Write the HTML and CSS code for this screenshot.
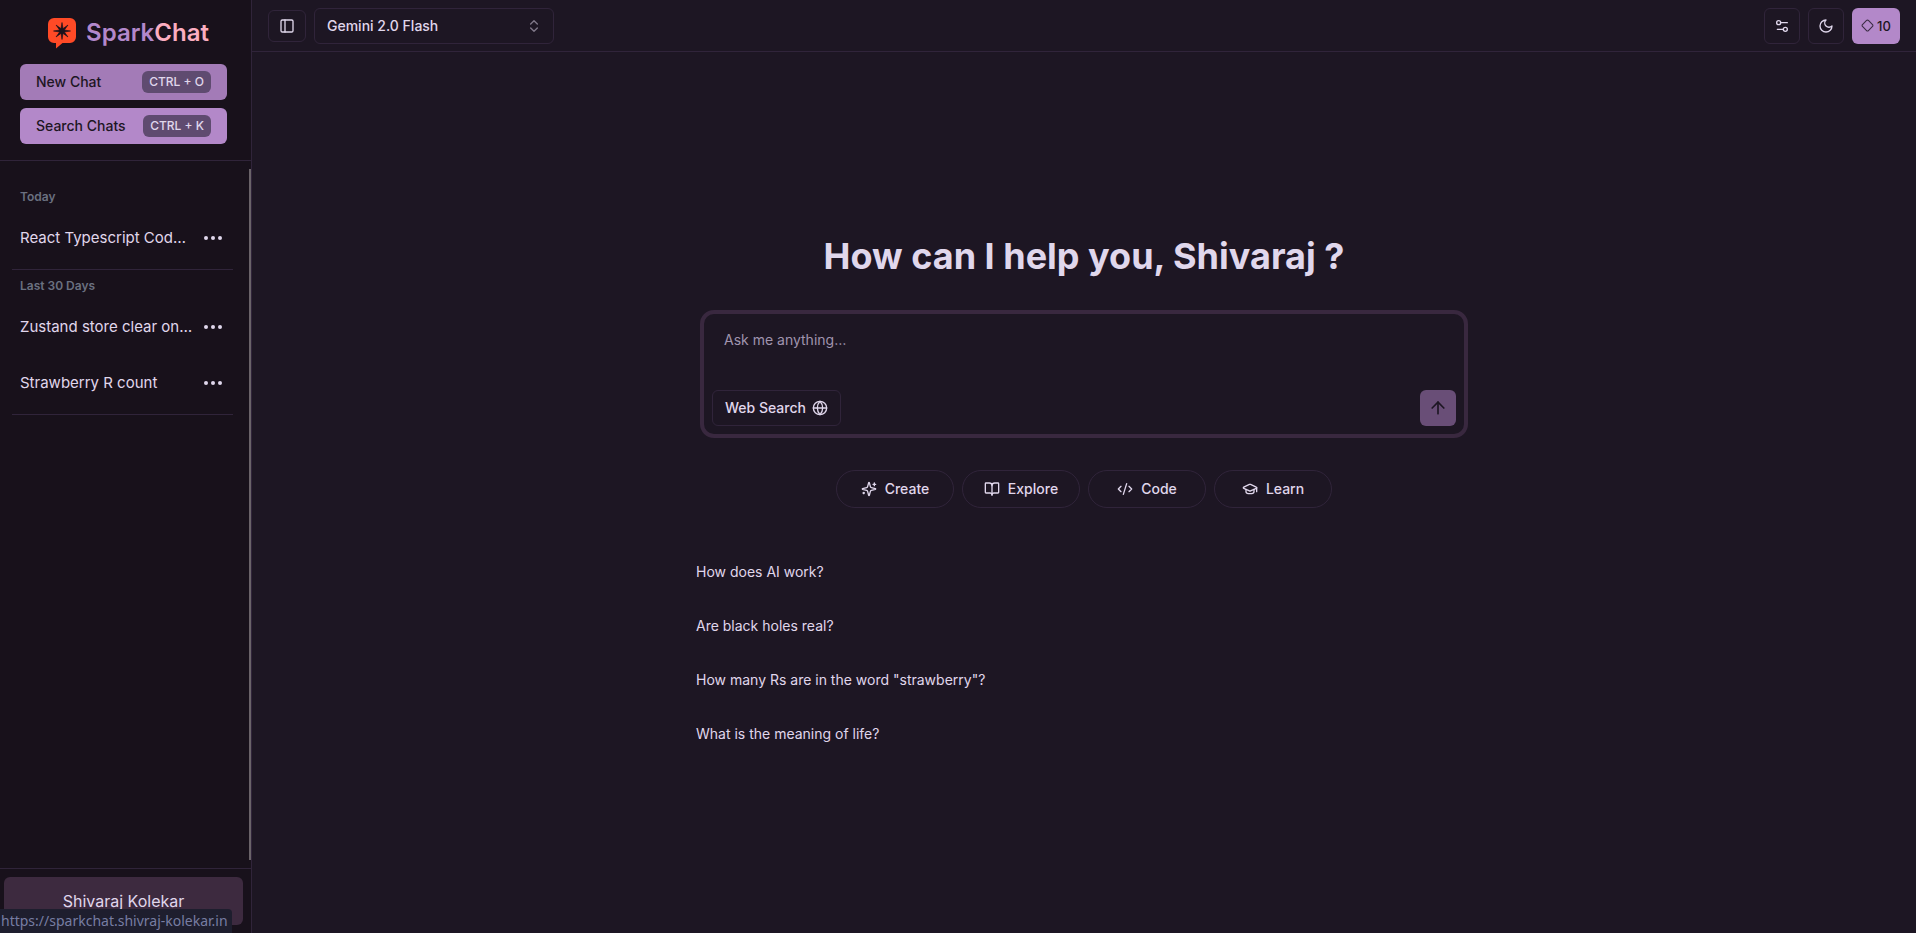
FILE: index.html
```html
<!DOCTYPE html>
<html lang="en">
<head>
<meta charset="utf-8">
<title>SparkChat</title>
<link rel="stylesheet" href="styles.css">
</head>
<body>
<div class="app">
  <aside class="sidebar">
    <div class="sidebar-top">
      <a class="brand" href="#">
        <svg class="brand-mark" viewBox="0 0 28 31" aria-hidden="true">
          <path fill="#ff4a26" d="M6 0h16a6 6 0 0 1 6 6v13a6 6 0 0 1-6 6h-7.500L8 30.500V25H6a6 6 0 0 1-6-6V6a6 6 0 0 1 6-6z"/>
          <path fill="#18111b" stroke="#18111b" stroke-width=".6" stroke-linejoin="round" d="M14 4.500l1 6.100L20 7l-3.600 5 6.100 1-6.100 1 3.600 5-5-3.600-1 6.100-1-6.100L8 19l3.600-5-6.100-1 6.100-1L8 7l5 3.600z"/>
        </svg>
        <span class="brand-name"><span class="brand-first">Spark</span><span class="brand-second">Chat</span></span>
      </a>
      <button class="action action-new" type="button">New Chat <kbd>CTRL + O</kbd></button>
      <button class="action" type="button">Search Chats <kbd>CTRL + K</kbd></button>
    </div>
    <nav class="history" aria-label="Chats">
      <section class="group">
        <h2>Today</h2>
        <div class="chat"><a href="#">React Typescript Cod…</a><button type="button" aria-label="More"><svg viewBox="0 0 20 6"><circle cx="3" cy="3" r="2"/><circle cx="10" cy="3" r="2"/><circle cx="17" cy="3" r="2"/></svg></button></div>
      </section>
      <section class="group">
        <h2>Last 30 Days</h2>
        <div class="chat"><a href="#">Zustand store clear on…</a><button type="button" aria-label="More"><svg viewBox="0 0 20 6"><circle cx="3" cy="3" r="2"/><circle cx="10" cy="3" r="2"/><circle cx="17" cy="3" r="2"/></svg></button></div>
        <div class="chat"><a href="#">Strawberry R count</a><button type="button" aria-label="More"><svg viewBox="0 0 20 6"><circle cx="3" cy="3" r="2"/><circle cx="10" cy="3" r="2"/><circle cx="17" cy="3" r="2"/></svg></button></div>
      </section>
    </nav>
    <div class="sidebar-foot"><button class="profile" type="button">Shivaraj Kolekar</button></div>
  </aside>
  <main class="main">
    <header class="topbar">
      <button class="icon-btn toggle" type="button" aria-label="Toggle sidebar"><svg class="icon" viewBox="0 0 24 24"><rect width="18" height="18" x="3" y="3" rx="2"/><path d="M9 3v18"/></svg></button>
      <div class="model">
        <select aria-label="Model"><option>Gemini 2.0 Flash</option></select>
        <svg class="icon model-arrows" viewBox="0 0 24 24"><path d="m7 15 5 5 5-5"/><path d="m7 9 5-5 5 5"/></svg>
      </div>
      <div class="tools">
        <button class="icon-btn" type="button" aria-label="Settings"><svg class="icon" viewBox="0 0 24 24"><path d="M20 7h-9"/><path d="M14 17H5"/><circle cx="17" cy="17" r="3"/><circle cx="7" cy="7" r="3"/></svg></button>
        <button class="icon-btn" type="button" aria-label="Theme"><svg class="icon" viewBox="0 0 24 24"><path d="M12 3a6 6 0 0 0 9 9 9 9 0 1 1-9-9Z"/></svg></button>
        <button class="credits" type="button"><svg class="icon credit-mark" viewBox="0 0 24 24"><path d="M2.700 10.300a2.410 2.410 0 0 0 0 3.410l7.590 7.590a2.410 2.410 0 0 0 3.410 0l7.590-7.590a2.410 2.410 0 0 0 0-3.410L13.700 2.710a2.410 2.410 0 0 0-3.410 0Z"/></svg>10</button>
      </div>
    </header>
    <div class="stage">
      <div class="welcome">
        <h1>How can I help you, Shivaraj ?</h1>
        <form class="composer">
          <textarea aria-label="Message" placeholder="Ask me anything…"></textarea>
          <div class="composer-row">
            <button class="web" type="button">Web Search <svg class="icon" viewBox="0 0 24 24"><circle cx="12" cy="12" r="10"/><path d="M12 2a14.500 14.500 0 0 0 0 20 14.500 14.500 0 0 0 0-20"/><path d="M2 12h20"/></svg></button>
            <button class="send" type="button" aria-label="Send"><svg class="icon" viewBox="0 0 24 24"><path d="m5 12 7-7 7 7"/><path d="M12 19V5"/></svg></button>
          </div>
        </form>
        <div class="topics">
          <button type="button"><svg class="icon" viewBox="0 0 24 24"><path d="M9.937 15.500A2 2 0 0 0 8.500 14.063l-6.135-1.582a.5.5 0 0 1 0-.962L8.500 9.936A2 2 0 0 0 9.937 8.500l1.582-6.135a.5.5 0 0 1 .963 0L14.063 8.500A2 2 0 0 0 15.500 9.937l6.135 1.581a.5.5 0 0 1 0 .964L15.500 14.063a2 2 0 0 0-1.437 1.437l-1.582 6.135a.5.5 0 0 1-.963 0z"/><path d="M20 3v4"/><path d="M22 5h-4"/><path d="M4 17v2"/><path d="M5 18H3"/></svg>Create</button>
          <button type="button"><svg class="icon" viewBox="0 0 24 24"><path d="M12 7v14"/><path d="M3 18a1 1 0 0 1-1-1V4a1 1 0 0 1 1-1h5a4 4 0 0 1 4 4 4 4 0 0 1 4-4h5a1 1 0 0 1 1 1v13a1 1 0 0 1-1 1h-6a3 3 0 0 0-3 3 3 3 0 0 0-3-3z"/></svg>Explore</button>
          <button type="button"><svg class="icon" viewBox="0 0 24 24"><path d="m18 16 4-4-4-4"/><path d="m6 8-4 4 4 4"/><path d="m14.500 4-5 16"/></svg>Code</button>
          <button type="button"><svg class="icon" viewBox="0 0 24 24"><path d="M21.420 10.922a1 1 0 0 0-.019-1.838L12.830 5.180a2 2 0 0 0-1.660 0L2.600 9.080a1 1 0 0 0 0 1.832l8.570 3.908a2 2 0 0 0 1.660 0z"/><path d="M22 10v6"/><path d="M6 12.500V16a6 3 0 0 0 12 0v-3.500"/></svg>Learn</button>
        </div>
        <div class="prompts">
          <button type="button">How does AI work?</button>
          <button type="button">Are black holes real?</button>
          <button type="button">How many Rs are in the word "strawberry"?</button>
          <button type="button">What is the meaning of life?</button>
        </div>
      </div>
    </div>
  </main>
</div>
<div class="link-status">https://sparkchat.shivraj-kolekar.in</div>
</body>
</html>
```

FILE: styles.css
```css
* { box-sizing: border-box; }
body {
  margin: 0;
  background: #1d1623;
  color: #e0d7ec;
  font-family: Inter, "Liberation Sans", sans-serif;
  font-size: 14px;
  line-height: 20px;
}
button, select, textarea { font: inherit; color: inherit; }
button { cursor: pointer; padding: 0; border: 0; background: none; }
a { color: inherit; text-decoration: none; }
.icon {
  width: 16px;
  height: 16px;
  flex: none;
  fill: none;
  stroke: currentColor;
  stroke-width: 2;
  stroke-linecap: round;
  stroke-linejoin: round;
}
.app { display: flex; height: 100vh; }

.sidebar {
  display: flex;
  flex-direction: column;
  width: 252px;
  flex: none;
  background: #18111b;
  border-right: 1px solid #30243a;
}
.sidebar-top {
  display: flex;
  flex-direction: column;
  gap: 8px;
  padding: 16px 24px 16px 20px;
  border-bottom: 1px solid #30243a;
}
.brand { display: flex; justify-content: center; align-items: center; gap: 10px; height: 32px; margin-bottom: 8px; padding: 2px 0 0 10px; }
.brand-mark { width: 28px; height: 31px; }
.brand-name { font-size: 24px; line-height: 32px; font-weight: 600; }
.brand-first { color: #b388cb; }
.brand-second { color: #fbadc0; }
.action {
  display: flex;
  align-items: center;
  justify-content: space-between;
  height: 36px;
  padding: 0 16px;
  border-radius: 6px;
  background: #b388c9;
  color: #1d1623;
  font-weight: 500;
}
.action-new { background: #a37bb7; }
kbd {
  padding: 3px 7px;
  border-radius: 6px;
  background: #5f4b70;
  color: #e0d7ec;
  font-family: inherit;
  font-size: 12px;
  line-height: 16px;
  font-weight: 500;
}
.history {
  flex: 1;
  margin: 8px 0;
  padding: 12px 16px 0 12px;
  border-right: 2px solid #6a6369;
  overflow: hidden;
}
.group { border-bottom: 1px solid #30243a; padding-bottom: 3px; }
.group h2 { margin: 0; padding: 8px 8px 5px; font-size: 12px; line-height: 16px; font-weight: 600; color: #6a7080; }
.chat { display: flex; align-items: center; height: 56px; padding: 0 8px; font-size: 15px; line-height: 24px; }
.chat a { flex: 1; min-width: 0; white-space: nowrap; }
.chat button { display: flex; width: 24px; justify-content: center; }
.chat svg { width: 20px; height: 6px; fill: #e0d7ec; }
.sidebar-foot { padding: 8px 8px 8px 4px; border-top: 1px solid #30243a; }
.profile { display: block; width: 100%; height: 48px; border-radius: 6px; background: #3d2a3f; font-size: 16px; line-height: 24px; }

.main { flex: 1; min-width: 0; display: flex; flex-direction: column; }
.topbar { display: flex; align-items: center; gap: 8px; height: 52px; padding: 0 16px; border-bottom: 1px solid #30243a; }
.icon-btn { display: grid; place-items: center; width: 36px; height: 36px; border: 1px solid #30243a; border-radius: 6px; }
.toggle { width: 38px; height: 32px; }
.model { display: grid; align-items: center; width: 240px; }
.model select {
  grid-area: 1 / 1;
  appearance: none;
  height: 36px;
  padding: 0 12px;
  border: 1px solid #30243a;
  border-radius: 6px;
  background: transparent;
  font-weight: 500;
}
.model-arrows { grid-area: 1 / 1; justify-self: end; margin-right: 12px; opacity: 0.5; pointer-events: none; }
.tools { display: flex; gap: 8px; margin-left: auto; }
.credits { display: flex; align-items: center; justify-content: center; gap: 3px; width: 48px; height: 36px; border-radius: 6px; background: #b388c9; color: #1d1623; font-size: 13px; font-weight: 500; }
.credit-mark { width: 13px; height: 13px; opacity: 0.8; }

.stage { flex: 1; display: flex; justify-content: center; padding: 184px 16px 0; }
.welcome { width: 100%; max-width: 776px; display: flex; flex-direction: column; }
h1 { margin: 0 0 34px; font-size: 36px; line-height: 40px; font-weight: 700; text-align: center; }
.composer { display: flex; flex-direction: column; margin: 0 4px; padding: 8px; border: 4px solid #39283f; border-radius: 14px; }
.composer textarea { display: block; height: 68px; padding: 8px 12px; border: 0; outline: 0; resize: none; background: transparent; }
.composer textarea::placeholder { color: #a094ae; opacity: 1; }
.composer-row { display: flex; justify-content: space-between; }
.web { display: flex; align-items: center; gap: 6px; height: 36px; padding: 0 12px; border: 1px solid #30243a; border-radius: 6px; font-weight: 500; }
.send { display: grid; place-items: center; width: 36px; height: 36px; border-radius: 6px; background: #694e77; color: #1d1623; }
.send .icon { width: 20px; height: 20px; }
.topics { display: flex; justify-content: center; gap: 8px; margin-top: 32px; }
.topics button { display: flex; align-items: center; justify-content: center; gap: 8px; width: 118px; height: 38px; border: 1px solid #30243a; border-radius: 19px; font-weight: 500; }
.prompts { display: flex; flex-direction: column; align-items: flex-start; gap: 18px; margin-top: 46px; }
.prompts button { height: 36px; text-align: left; }

.link-status {
  position: fixed;
  left: 0;
  bottom: 0;
  padding: 2px 4px 2px 1px;
  border-radius: 0 4px 0 0;
  background: #1e1e2e;
  color: #777da2;
  font-family: "Noto Sans", sans-serif;
  font-size: 14px;
  line-height: 20px;
}
```
